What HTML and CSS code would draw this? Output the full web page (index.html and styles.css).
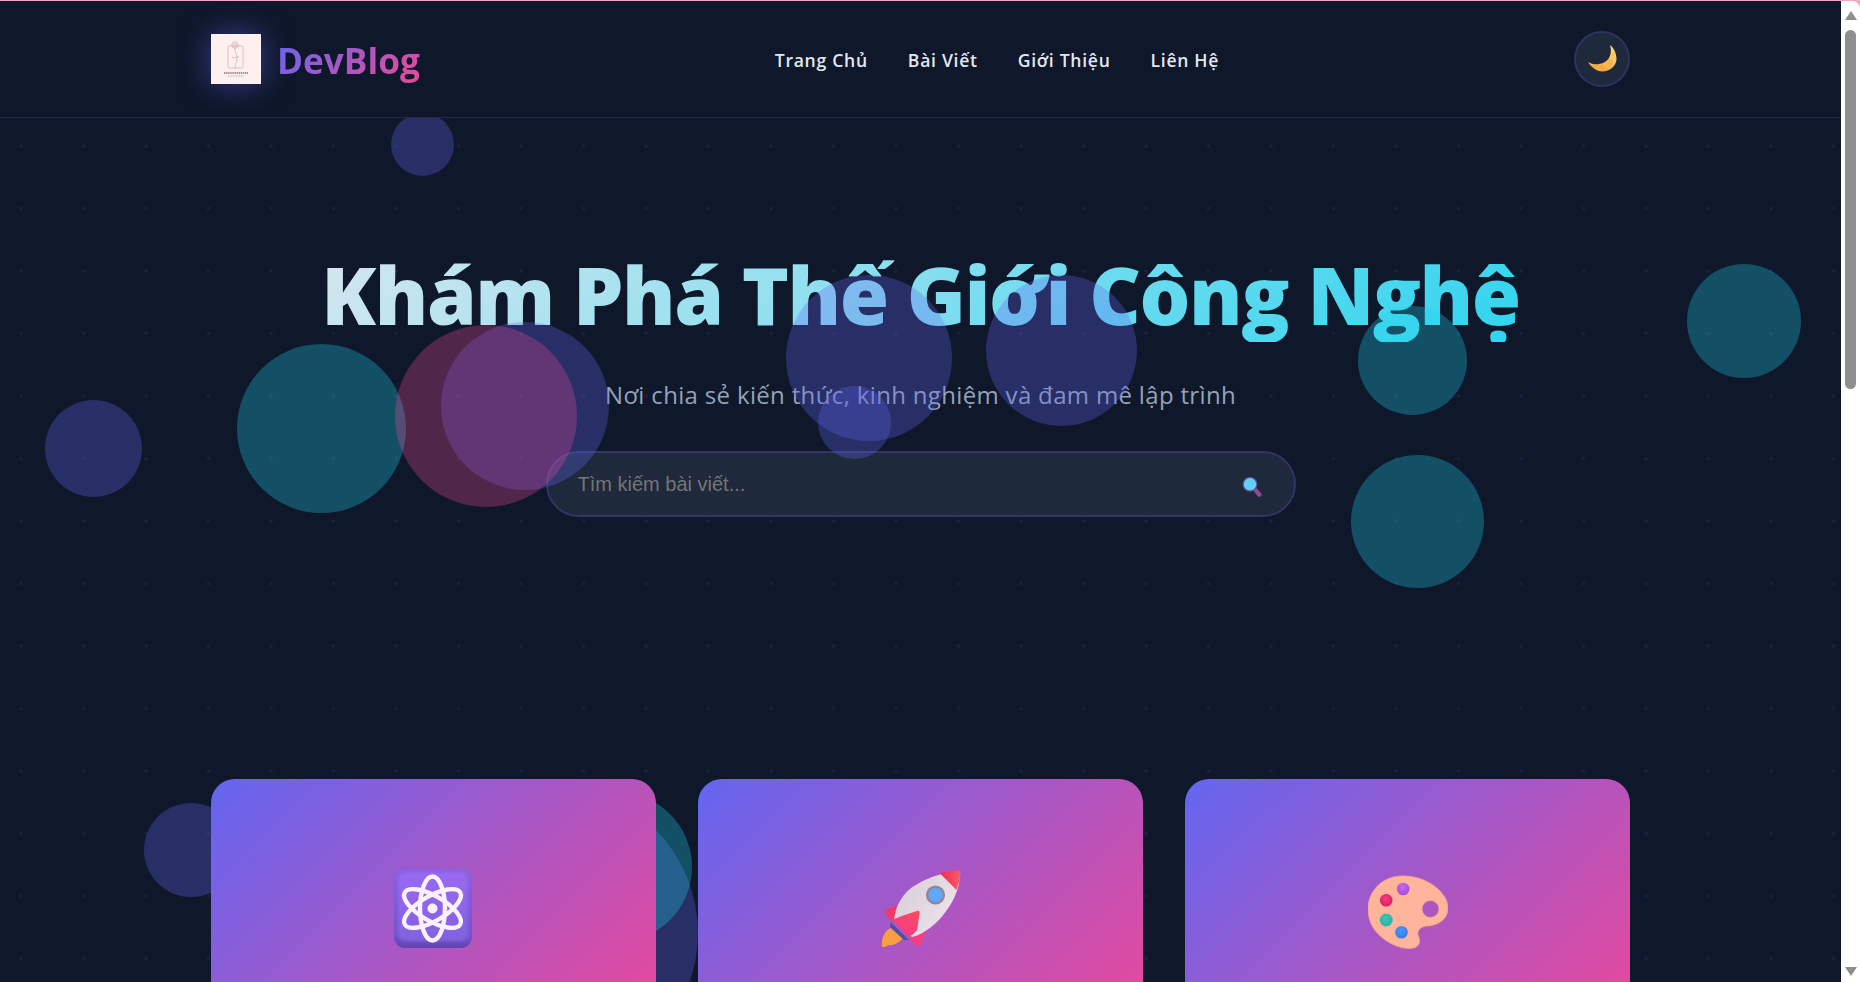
FILE: index.html
```html
<!DOCTYPE html>
<html lang="vi">
<head>
  <meta charset="UTF-8">
  <meta name="viewport" content="width=device-width, initial-scale=1.0">
  <title>DevBlog</title>
  <link rel="stylesheet" href="styles.css">
</head>
<body>
  <div class="page">
    <div class="top-edge"></div>

    <header class="site-header">
      <a class="brand" href="#">
        <svg class="brand-logo" viewBox="0 0 50 50">
          <rect width="50" height="50" fill="#fff0f0"/>
          <g fill="none" stroke="#b09298" stroke-width="0.5">
            <rect x="17" y="12" width="15" height="22" rx="1"/>
            <circle cx="24" cy="11" r="3.2"/>
            <circle cx="24" cy="11" r="1.5"/>
            <path d="M24 14 C23 19 27 21 26 25 C25 29 24 31 24 34"/>
            <path d="M21 23 C23 24 26 24 28 22"/>
          </g>
          <g stroke="#8a6a72">
            <path d="M13 39 H37" stroke-width="1.6" stroke-dasharray="1.4 0.7"/>
            <path d="M17 42 H33" stroke-width="0.8" stroke-dasharray="1 0.6" stroke-opacity="0.7"/>
          </g>
        </svg>
        <span class="brand-name">DevBlog</span>
      </a>
      <nav class="main-nav">
        <a href="#">Trang Chủ</a>
        <a href="#">Bài Viết</a>
        <a href="#">Giới Thiệu</a>
        <a href="#">Liên Hệ</a>
      </nav>
      <button class="theme-toggle" type="button" aria-label="Đổi giao diện">
        <svg viewBox="0 0 29 28" width="29" height="28">
          <defs>
            <linearGradient id="moon" x1="0.7" y1="0" x2="0.4" y2="1">
              <stop offset="0" stop-color="#ffdf80"/>
              <stop offset="1" stop-color="#f7a63e"/>
            </linearGradient>
          </defs>
          <path fill="url(#moon)" d="M22 0 C24 6 23 14 16 17.5 C11 20 5 20 0 17 C3 22 9 27 15 26.5 C24 26 29 19 28.5 13 C28 7 25 2 22 0 Z"/>
          <g fill="none" stroke="#e8963a" stroke-width="0.6" opacity="0.7">
            <circle cx="22" cy="17" r="2"/>
            <circle cx="25" cy="9" r="1.2"/>
            <circle cx="14" cy="22" r="1.4"/>
          </g>
        </svg>
      </button>
    </header>

    <section class="hero">
      <h1>Khám Phá Thế Giới Công Nghệ</h1>
      <p>Nơi chia sẻ kiến thức, kinh nghiệm và đam mê lập trình</p>
      <form class="search-box">
        <input type="text" placeholder="Tìm kiếm bài viết...">
        <button type="button" aria-label="Tìm kiếm">
          <svg viewBox="0 0 20 20" width="20" height="20">
            <path d="M13.7 13.4 L17.3 17.6" stroke="#8f4a95" stroke-width="4.4" stroke-linecap="round"/>
            <circle cx="8" cy="7.3" r="6.8" fill="#5ed0f4" stroke="#6b4a9c" stroke-width="1.2"/>
          </svg>
        </button>
      </form>
    </section>

    <section class="card-grid">
      <article class="card">
        <div class="card-image">
          <svg viewBox="0 0 80 80" width="80" height="80">
            <defs>
              <linearGradient id="atom-edge" x1="0" y1="0" x2="0" y2="1">
                <stop offset="0" stop-color="#8a60e0"/>
                <stop offset="0.85" stop-color="#7453cc"/>
                <stop offset="1" stop-color="#5f42ae"/>
              </linearGradient>
              <linearGradient id="atom-face" x1="0" y1="0" x2="0" y2="1">
                <stop offset="0" stop-color="#9a68f2"/>
                <stop offset="1" stop-color="#8262de"/>
              </linearGradient>
              <filter id="atom-soft"><feGaussianBlur stdDeviation="1.6"/></filter>
            </defs>
            <rect x="0" y="0" width="78" height="79" rx="11" fill="url(#atom-edge)"/>
            <rect x="4" y="3" width="70" height="69" rx="8" fill="url(#atom-face)" filter="url(#atom-soft)"/>
            <g fill="none" stroke="#fbf0ff" stroke-width="4.4">
              <ellipse cx="38.5" cy="39.5" rx="12.5" ry="32"/>
              <ellipse cx="38.5" cy="39.5" rx="12.5" ry="32" transform="rotate(60 38.5 39.5)"/>
              <ellipse cx="38.5" cy="39.5" rx="12.5" ry="32" transform="rotate(-60 38.5 39.5)"/>
            </g>
            <circle cx="38.5" cy="39.5" r="5" fill="#fbf0ff"/>
          </svg>
        </div>
      </article>
      <article class="card">
        <div class="card-image">
          <svg viewBox="0 0 80 80" width="80" height="80">
            <defs>
              <linearGradient id="rocket-body" x1="0" y1="0.2" x2="1" y2="0.8">
                <stop offset="0" stop-color="#d8cdd6"/>
                <stop offset="1" stop-color="#efe6f0"/>
              </linearGradient>
              <linearGradient id="rocket-fin" x1="0.8" y1="0" x2="0.2" y2="1">
                <stop offset="0" stop-color="#fb4a62"/>
                <stop offset="1" stop-color="#f5388a"/>
              </linearGradient>
              <linearGradient id="rocket-nose" x1="0" y1="0.5" x2="1" y2="0.5">
                <stop offset="0" stop-color="#ee2c4c"/>
                <stop offset="1" stop-color="#fb5a6c"/>
              </linearGradient>
              <linearGradient id="rocket-flame" x1="0.8" y1="0" x2="0.2" y2="1">
                <stop offset="0" stop-color="#fb9c48"/>
                <stop offset="1" stop-color="#f7a23c"/>
              </linearGradient>
            </defs>
            <path fill="url(#rocket-flame)" d="M10 59 L22 69 C18 74 12 77 7 76 C5 78 3 78 1 78 C0 70 3 62 10 59 Z"/>
            <path fill="#f0386a" d="M3 42 C8 39 14 37 20 35 L12 53 C9 50 5 46 3 42 Z"/>
            <path fill="#f83f82" d="M46 59 L40 74 Q37 79 34 76 L28 69 Z"/>
            <path fill="#4f4fa6" d="M9.5 53 L28 71 L23 71 L9 58 Z"/>
            <path fill="url(#rocket-body)" d="M79 2 C70 1 45 8 30 19 C18 29 14 41 13 51 L31 68 C42 66 58 54 68 38 C76 26 80 12 79 2 Z"/>
            <path fill="url(#rocket-nose)" d="M79 2 C72 1 65 2 58.8 4.3 L75.5 21 C78 14 80 8 79 2 Z"/>
            <circle cx="54.5" cy="26" r="9.6" fill="#8f8a98"/>
            <circle cx="54.5" cy="26" r="7" fill="#5fa8ff"/>
            <path fill="url(#rocket-fin)" d="M36 42 Q39 41 38.5 45 L36 61 Q34 64 28 68 L11 51 Q25 45 36 42 Z"/>
          </svg>
        </div>
      </article>
      <article class="card">
        <div class="card-image">
          <svg viewBox="0 0 80 80" width="80" height="80">
            <defs>
              <radialGradient id="dot-purple" cx="0.45" cy="0.35"><stop offset="0" stop-color="#c46cf0"/><stop offset="1" stop-color="#a852d8"/></radialGradient>
              <radialGradient id="dot-red" cx="0.45" cy="0.35"><stop offset="0" stop-color="#f83a80"/><stop offset="1" stop-color="#e02468"/></radialGradient>
              <radialGradient id="dot-teal" cx="0.45" cy="0.35"><stop offset="0" stop-color="#38c8a8"/><stop offset="1" stop-color="#2fb4b0"/></radialGradient>
              <radialGradient id="dot-blue" cx="0.45" cy="0.35"><stop offset="0" stop-color="#4a98f8"/><stop offset="1" stop-color="#3a80e8"/></radialGradient>
            </defs>
            <path fill="#ffb49c" stroke="#f8a58a" stroke-width="0.8" fill-rule="evenodd" d="M36 7 C16 6 0 21 0 40 C0 56 10 68 24 75 C32 79 42 81 48 78 C53 75 52 70 50 66 C49 62 52 58 58 57 C70 57 80 50 80 39 C80 23 58 7 36 7 Z M62.5 31.5 A8.5 8.5 0 1 0 62.5 48.5 A8.5 8.5 0 1 0 62.5 31.5 Z"/>
            <circle cx="35.2" cy="20" r="6.3" fill="url(#dot-purple)"/>
            <circle cx="18.2" cy="31.3" r="6.3" fill="url(#dot-red)"/>
            <circle cx="18.2" cy="51" r="6.5" fill="url(#dot-teal)"/>
            <circle cx="33.5" cy="63.3" r="6.3" fill="url(#dot-blue)"/>
          </svg>
        </div>
      </article>
    </section>

    <!-- floating circles, these sit over the hero but under header and cards -->
    <div class="bubble indigo b1"></div>
    <div class="bubble teal b2"></div>
    <div class="bubble indigo b4"></div>
    <div class="bubble pink b3"></div>
    <div class="bubble indigo b5"></div>
    <div class="bubble indigo b6"></div>
    <div class="bubble indigo b7"></div>
    <div class="bubble teal b8"></div>
    <div class="bubble teal b9"></div>
    <div class="bubble teal b10"></div>
    <div class="bubble indigo b11"></div>
    <div class="bubble indigo b12"></div>
    <div class="bubble indigo b14"></div>
    <div class="bubble teal b13"></div>
  </div>

  <div class="scrollbar">
    <div class="arrow-up"></div>
    <div class="thumb"></div>
    <div class="arrow-down"></div>
  </div>
</body>
</html>
```

FILE: styles.css
```css
* {
  box-sizing: border-box;
  margin: 0;
  padding: 0;
}

html, body {
  height: 100%;
  overflow: hidden;
}

body {
  display: flex;
  background: #f5a8c4;
  font-family: "Open Sans", "Noto Sans", sans-serif;
  color: #e2e8f0;
}

.page {
  position: relative;
  flex: 1;
  min-width: 0;
  overflow: hidden;
  background-color: #0f172a;
  background-image: radial-gradient(circle at 21px 21px, rgba(99, 102, 241, 0.12) 1.5px, transparent 2px);
  background-size: 62.5px 62.5px;
}

.top-edge {
  height: 1px;
  background: #f5a8c4;
}

.site-header {
  position: relative;
  z-index: 2;
  height: 117px;
  padding: 0 211px;
  display: flex;
  justify-content: space-between;
  align-items: center;
  background: #0f172a;
  border-bottom: 1px solid #202752;
}

.brand {
  display: flex;
  align-items: center;
  gap: 16px;
  text-decoration: none;
}

.brand-logo {
  width: 50px;
  height: 50px;
  box-shadow: 0 0 30px rgba(99, 102, 241, 0.5);
}

.brand-name {
  padding-top: 2px;
  font-size: 35.2px;
  font-weight: 700;
  background: linear-gradient(135deg, #6366f1, #ec4899);
  -webkit-background-clip: text;
  background-clip: text;
  color: transparent;
}

.main-nav {
  display: flex;
  gap: 40px;
  padding-top: 2px;
}

.main-nav a {
  font-size: 17.6px;
  font-weight: 600;
  letter-spacing: 0.7px;
  color: #e2e8f0;
  text-decoration: none;
}

.theme-toggle {
  width: 56px;
  height: 56px;
  display: flex;
  justify-content: center;
  align-items: center;
  background: #1e293b;
  border: 2px solid #2c3363;
  border-radius: 50%;
}

.hero {
  padding: 128px 211px 0;
  text-align: center;
}

.hero h1 {
  font-size: 80px;
  line-height: 1.2;
  font-weight: 800;
  letter-spacing: -1.5px;
  background: linear-gradient(135deg, #e2e8f0, #22d3ee);
  -webkit-background-clip: text;
  background-clip: text;
  color: transparent;
}

.hero p {
  margin-top: 36px;
  font-size: 24px;
  letter-spacing: 0.33px;
  color: #94a3b8;
}

.search-box {
  width: 750px;
  height: 66px;
  margin: 40px auto 0;
  padding: 0 32px 0 30px;
  display: flex;
  align-items: center;
  background: #1e293b;
  border: 2px solid #2f3566;
  border-radius: 33px;
}

.search-box input {
  flex: 1;
  background: transparent;
  border: none;
  outline: none;
  font-family: "Liberation Sans", sans-serif;
  font-size: 20px;
  color: #e2e8f0;
}

.search-box input::placeholder {
  color: #757575;
}

.search-box button {
  display: flex;
  padding-top: 6px;
  background: none;
  border: none;
}

.card-grid {
  position: relative;
  z-index: 2;
  margin-top: 262px;
  padding: 0 211px;
  display: grid;
  grid-template-columns: repeat(3, 1fr);
  gap: 42px;
}

.card {
  border-radius: 24px;
  overflow: hidden;
}

.card-image {
  height: 260px;
  display: flex;
  justify-content: center;
  align-items: center;
  background: linear-gradient(135deg, #6366f1, #ec4899);
}

.bubble {
  position: absolute;
  border-radius: 50%;
}

.indigo { background: rgba(99, 102, 241, 0.3); }
.teal { background: rgba(34, 211, 238, 0.3); }
.pink { background: rgba(236, 72, 153, 0.3); }

.b1 { left: 391px; top: 113px; width: 63px; height: 63px; }
.b2 { left: 237px; top: 344px; width: 169px; height: 169px; }
.b3 { left: 395px; top: 325px; width: 182px; height: 182px; }
.b4 { left: 441px; top: 322px; width: 168px; height: 168px; }
.b5 { left: 786px; top: 275px; width: 166px; height: 166px; }
.b6 { left: 818px; top: 386px; width: 73px; height: 73px; }
.b7 { left: 986px; top: 275px; width: 151px; height: 151px; }
.b8 { left: 1358px; top: 306px; width: 109px; height: 109px; }
.b9 { left: 1351px; top: 455px; width: 133px; height: 133px; }
.b10 { left: 1687px; top: 264px; width: 114px; height: 114px; }
.b11 { left: 45px; top: 400px; width: 97px; height: 97px; }
.b12 { left: 144px; top: 803px; width: 94px; height: 94px; }
.b13 { left: 542px; top: 792px; width: 150px; height: 150px; }
.b14 { left: 404px; top: 786px; width: 294px; height: 294px; }

.scrollbar {
  width: 19px;
  display: flex;
  flex-direction: column;
  align-items: center;
  background: #fff;
  border-top-right-radius: 8px;
  margin-top: 1px;
}

.arrow-up {
  margin-top: 10px;
  border-left: 6px solid transparent;
  border-right: 6px solid transparent;
  border-bottom: 9px solid #8f8f8f;
}

.thumb {
  width: 11px;
  height: 359px;
  margin-top: 10px;
  background: #8f8f8f;
  border-radius: 6px;
}

.arrow-down {
  margin-top: auto;
  margin-bottom: 6px;
  border-left: 6px solid transparent;
  border-right: 6px solid transparent;
  border-top: 9px solid #8f8f8f;
}
```
